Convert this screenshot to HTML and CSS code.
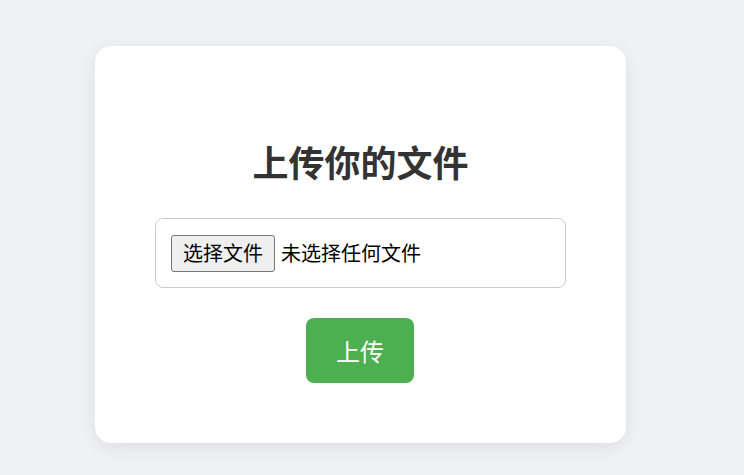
FILE: index.html
```html
<!DOCTYPE html>
<html lang="zh">
<head>
<meta charset="utf-8">
<title>上传文件</title>
<link rel="stylesheet" href="styles.css">
</head>
<body>
<div class="card">
  <h1 class="title">上传你的文件</h1>
  <form class="form">
    <label class="file-box">
      <input class="file-input" type="file">
      <span class="file-btn">选择文件</span>
      <span class="file-name">未选择任何文件</span>
    </label>
    <button class="submit" type="button">上传</button>
  </form>
</div>
</body>
</html>
```
FILE: styles.css
```css
html, body {
  margin: 0;
  height: 100%;
}
body {
  background: #f0f1f5;
  font-family: "Liberation Sans", "Noto Sans CJK SC", sans-serif;
  padding: 46px 0 0 95px;
  box-sizing: border-box;
}
.card {
  width: 531px;
  box-sizing: border-box;
  background: #fff;
  border-radius: 16px;
  box-shadow: 0 4px 18px rgba(0, 0, 0, 0.08);
  padding: 93px 60px 60px;
  text-align: center;
}
.title {
  margin: 0 0 27px;
  font-size: 36px;
  line-height: 52px;
  font-weight: 700;
  color: #333;
}
.form {
  display: flex;
  flex-direction: column;
  align-items: center;
}
.file-box {
  width: 100%;
  height: 70px;
  box-sizing: border-box;
  border: 1px solid #ccc;
  border-radius: 8px;
  padding: 0 15px;
  display: flex;
  align-items: center;
  gap: 6px;
  font-family: "Noto Sans CJK SC", sans-serif;
  font-size: 20px;
  color: #000;
}
.file-input {
  display: none;
}
.file-btn {
  display: flex;
  align-items: center;
  justify-content: center;
  width: 104px;
  height: 37px;
  box-sizing: border-box;
  background: #efefef;
  border: 1px solid #767676;
  border-radius: 3px;
  line-height: 1;
}
.file-name {
  line-height: 1;
}
.submit {
  margin: 30px 1px 0 0;
  width: 108px;
  height: 65px;
  border: none;
  border-radius: 8px;
  background: #4caf50;
  color: #fff;
  font-family: "Noto Sans CJK SC", sans-serif;
  font-size: 24px;
}
```
